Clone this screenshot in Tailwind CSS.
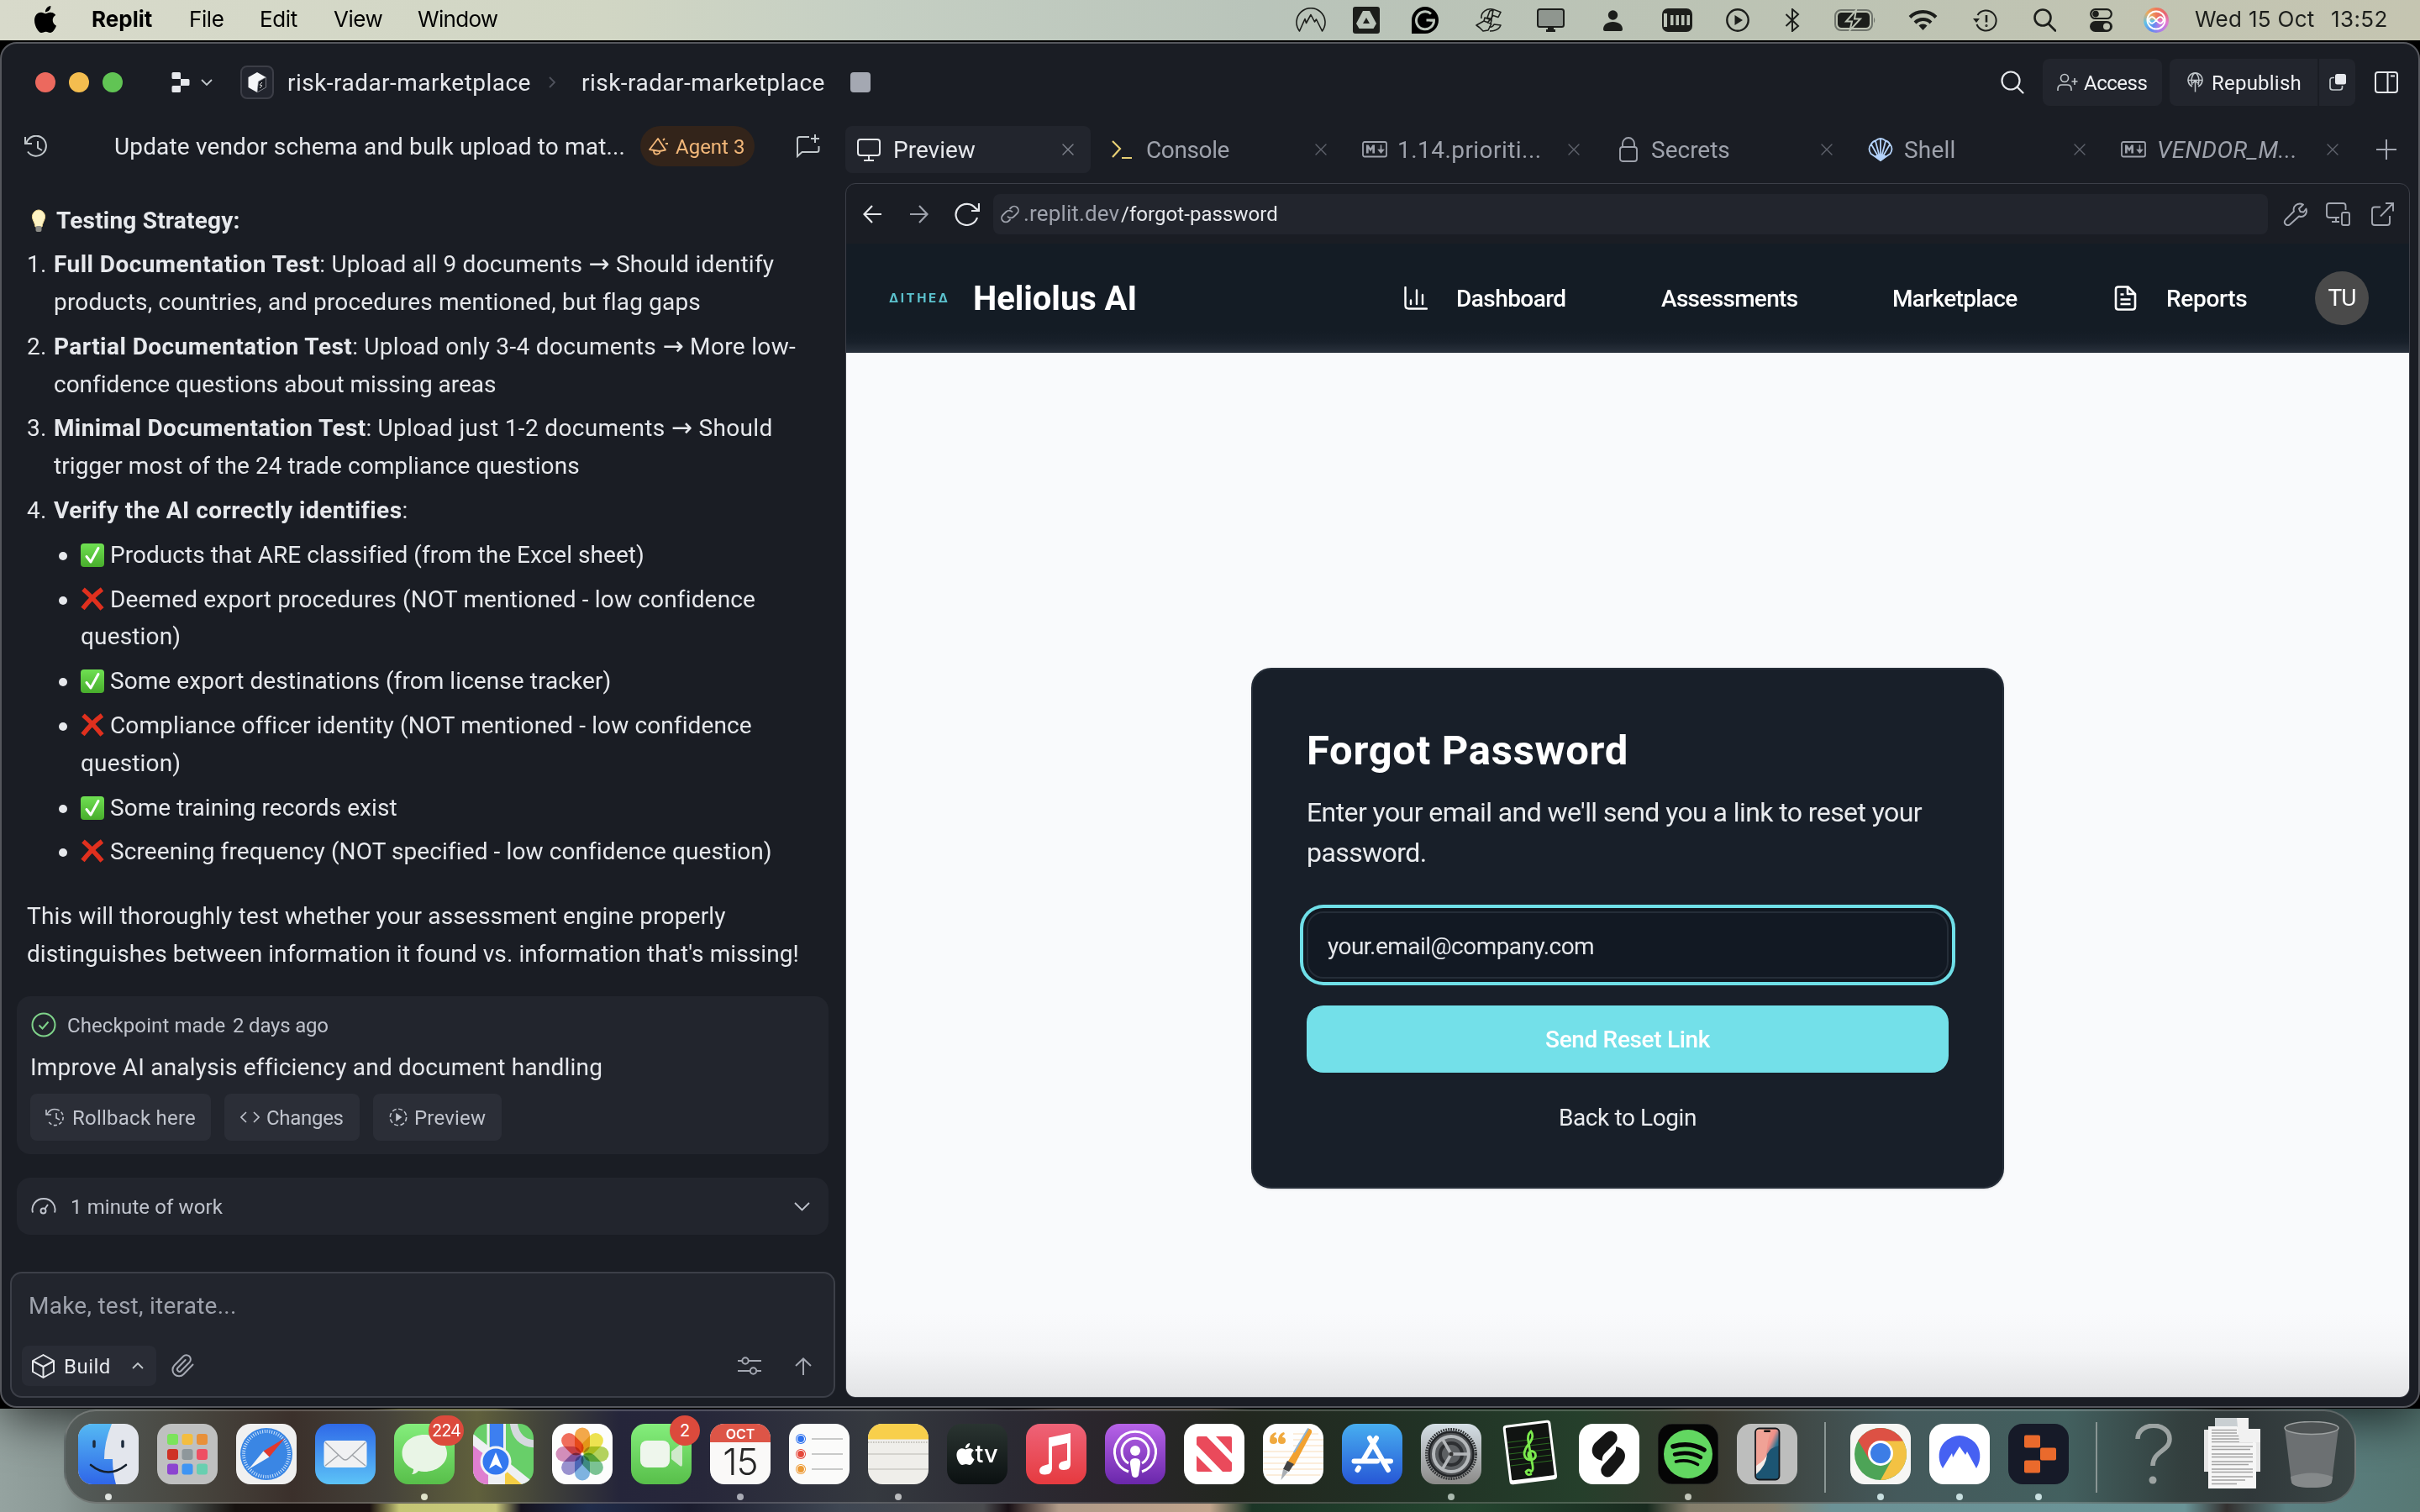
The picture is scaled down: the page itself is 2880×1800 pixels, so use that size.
<!DOCTYPE html>
<html lang="en">
<head>
<meta charset="utf-8">
<title>Replit</title>
<script src="https://cdn.jsdelivr.net/npm/@tailwindcss/browser@4"></script>
</head>
<body class="w-[2880px] h-[1800px] overflow-hidden bg-[#1b1d22] font-[Roboto,sans-serif]">

<svg class="absolute size-0">
  <defs><linearGradient id="yg" x1="0" y1="0" x2="0" y2="1"><stop offset="0" stop-color="#6fe052"/><stop offset="1" stop-color="#48ad2c"/></linearGradient></defs>
  <symbol id="x" viewBox="0 0 14 14"><path d="M1 1l12 12M13 1L1 13" fill="none" stroke="currentColor" stroke-width="1.4" stroke-linecap="round"/></symbol>
  <symbol id="md" viewBox="0 0 30 20"><rect x="1" y="1" width="28" height="17.500" rx="2" fill="none" stroke="currentColor" stroke-width="1.8"/><path d="M5 14.500v-10h2.500l2.500 4 2.500-4h2.500v10h-2.700v-5.500l-2.300 3.500-2.300-3.500v5.500z" fill="currentColor"/><path d="M22.500 4.500v8M19.800 10.500l2.700 3.200 2.700-3.200z" fill="currentColor" stroke="currentColor" stroke-width="1.600"/></symbol>
  <symbol id="yes" viewBox="0 0 28 28"><rect width="28" height="28" rx="4" fill="url(#yg)"/><path d="M7 15.500l5 6.500L21 5.500" fill="none" stroke="#fff" stroke-width="3" stroke-linecap="round" stroke-linejoin="round"/></symbol>
  <symbol id="no" viewBox="0 0 28 28"><path d="M3 2.500Q12 10 25.500 26M25.500 2.500Q14 11 2.500 25.500" fill="none" stroke="#e0301e" stroke-width="5.500"/></symbol>
</svg>

<div class="flex flex-col w-full h-full bg-[linear-gradient(90deg,#95a3a0_0,#8b9996_70px,#5d6763_200px,#17120f_280px,#1b1211_440px,#c4c574_475px,#c9c87c_590px,#15131f_620px,#202c4a_700px,#1b1c2e_820px,#3e4652_1000px,#4a4b4e_1170px,#191015_1200px,#b09a88_1260px,#c0a48c_1440px,#1b3526_1490px,#24452f_1750px,#182a1e_1960px,#857f6c_2010px,#8b8471_2110px,#6c9296_2180px,#6a9497_2600px,#33302f_2650px,#5d8284_2720px,#577874_2880px)]">

  <!-- menu bar -->
  <header class="relative z-10 h-12 shrink-0 flex items-center bg-[linear-gradient(90deg,#d8dacb,#d1d6c4_25%,#c5cfc3_36%,#b9c4ba_52%,#bcc3b4_72%,#c5c5b1)] text-[26px] leading-[30px] font-[Inter,sans-serif] text-black whitespace-nowrap">
    <svg class="ml-[38px] w-[32px] h-[32px] mb-[3px]" viewBox="0 0 24 24"><path d="M12.152 6.896c-.948 0-2.415-1.078-3.960-1.040-2.040.027-3.910 1.183-4.961 3.014-2.117 3.675-.546 9.103 1.519 12.090 1.013 1.454 2.208 3.090 3.792 3.039 1.520-.065 2.090-.987 3.935-.987 1.831 0 2.350.987 3.960.948 1.637-.026 2.676-1.480 3.676-2.948 1.156-1.688 1.636-3.325 1.662-3.415-.039-.013-3.182-1.221-3.220-4.857-.026-3.040 2.480-4.494 2.597-4.559-1.429-2.090-3.623-2.324-4.390-2.376-2-.156-3.675 1.090-4.610 1.090zM15.530 3.830c.843-1.012 1.400-2.427 1.245-3.830-1.207.052-2.662.805-3.532 1.818-.780.896-1.454 2.338-1.273 3.714 1.338.104 2.715-.688 3.559-1.701"/></svg>
    <span class="ml-[39px] pb-[2px] w-[116px] font-bold">Replit</span>
    <span class="pb-[2px] w-[84px] tracking-[-0.4px]">File</span>
    <span class="pb-[2px] w-[88px] tracking-[-0.4px]">Edit</span>
    <span class="pb-[2px] w-[100px] tracking-[-0.5px]">View</span>
    <span class="pb-[2px] w-[96px] tracking-[-0.7px]">Window</span>
    <div class="ml-auto pr-[38px] flex items-center text-[#1c1e1b]">
      <svg class="w-9 h-[30px]" viewBox="0 0 36 30" fill="none" stroke="currentColor" stroke-width="1.6" stroke-linejoin="round"><path d="M4.500 28A17 17 0 1 1 31.500 28L24.500 14l-2 3-4.500-8.500-5.500 10-1.500-5z"/></svg>
      <svg class="ml-8 w-8 h-8" viewBox="0 0 32 32"><rect width="32" height="32" rx="3" fill="currentColor"/><path d="M12 5h8l8 15-3.500 6h-17L4 20z" fill="#bac4ba"/><path d="M16 13l4 7h-8z" fill="currentColor"/></svg>
      <svg class="ml-[38px] w-8 h-8" viewBox="0 0 32 32"><path d="M0 32V16A16 16 0 1 1 16 32z" fill="#000"/><path d="M23 8.500A10.500 10.500 0 1 0 26.500 16h-9M26.500 16l-5 .2" fill="none" stroke="#bcc5bb" stroke-width="3"/></svg>
      <svg class="ml-11 w-8 h-7" viewBox="0 0 32 28" fill="none" stroke="currentColor" stroke-width="1.600" stroke-linejoin="round"><path d="M7 12C6 4 14-1 22 1.500l8 3-3 6-6-2-7 9M17 3l4-1-2 11-5-2zM11 11l8 3-1 4-8-3zM10 15L1 20l4 3 4 4 6-1 4-8M16 22c3 1 5-1 6-3l8 1c-2 5-8 7-13 7"/></svg>
      <svg class="ml-[41px] w-[33px] h-7" viewBox="0 0 33 28"><rect x="1" y="1" width="31" height="21" rx="2.500" fill="#8f968f" stroke="currentColor" stroke-width="2"/><path d="M13 22h7v3h2v3H11v-3h2z" fill="currentColor"/></svg>
      <svg class="ml-[46px] w-[23px] h-[25px]" viewBox="0 0 23 25" fill="currentColor"><circle cx="11.500" cy="6" r="5.700"/><path d="M0 23c0-5.500 4.500-9 11.500-9S23 17.500 23 23q0 2-2 2H2q-2 0-2-2z"/></svg>
      <svg class="ml-[47px] w-9 h-7" viewBox="0 0 36 28"><rect width="36" height="28" rx="7" fill="currentColor"/><path d="M2 6h4v16H2zM10 8h3.500v12H10zM16.500 8H20v12h-3.500zM23 8h3.500v12H23zM29.500 8H33v12h-3.500z" fill="#bcc4b8"/></svg>
      <svg class="ml-10 w-7 h-7" viewBox="0 0 28 28"><circle cx="14" cy="14" r="12.700" fill="none" stroke="currentColor" stroke-width="2.400"/><path d="M10.500 8l9.500 6-9.500 6z" fill="currentColor"/></svg>
      <svg class="ml-[42px] w-[18px] h-7" viewBox="0 0 18 28" fill="none" stroke="currentColor" stroke-width="2"><path d="M1.500 7l14.500 14-7 6V1l7 6L1.500 21"/></svg>
      <svg class="ml-[41px] w-[50px] h-[26px]" viewBox="0 0 50 26"><rect x="1" y="1" width="44" height="24" rx="7" fill="none" stroke="#6f746c" stroke-width="2"/><rect x="4" y="4" width="38" height="18" rx="4.500" fill="currentColor"/><path d="M26 1L14 14.500h7L18.500 25 31 11.500h-7z" fill="currentColor" stroke="#bcc3b4" stroke-width="2"/><path d="M47 9.500q2.500 3.500 0 7z" fill="#6f746c"/></svg>
      <svg class="ml-[38px] w-[35px] h-[26px]" viewBox="0 0 35 26" fill="none" stroke="currentColor" stroke-width="4"><path d="M2 9.500a22 22 0 0 1 31 0"/><path d="M8 16a13.500 13.500 0 0 1 19 0"/><path d="M17.500 25l-5-5.500a7.500 7.500 0 0 1 10 0z" fill="currentColor" stroke="none"/></svg>
      <svg class="ml-[42px] w-[29px] h-7" viewBox="0 0 29 28" fill="none" stroke="currentColor" stroke-width="2"><path d="M5.500 8A12 12 0 1 1 4.500 19"/><path d="M0 12h8l-4 5z" fill="currentColor" stroke="none"/><path d="M16 8v8.500" stroke-width="2.600"/><circle cx="16" cy="20.500" r=".6"/></svg>
      <svg class="ml-[43px] w-[27px] h-7" viewBox="0 0 27 28" fill="none" stroke="currentColor" stroke-width="2.600"><circle cx="11" cy="11" r="9.500"/><path d="M18 18.500l8 8" stroke-linecap="round"/></svg>
      <svg class="ml-10 w-[27px] h-7" viewBox="0 0 27 28"><rect x="1.200" y="1.200" width="24.600" height="10.800" rx="5.400" fill="none" stroke="currentColor" stroke-width="2.200"/><circle cx="7" cy="6.600" r="3.800" fill="currentColor"/><rect y="15" width="27" height="13" rx="6.500" fill="currentColor"/><circle cx="20" cy="21.500" r="4" fill="#c0c4b3"/></svg>
      <div class="ml-[37px] w-[30px] h-[30px] rounded-full bg-[conic-gradient(#ef7a5a,#e8656e,#e47ad0,#b07be8,#5f8df0,#5fc3e8,#e9ab5f,#ef7a5a)] flex items-center justify-center">
        <svg class="w-6 h-6" viewBox="0 0 24 24" fill="none" stroke="#fff" stroke-width="2"><circle cx="12" cy="12" r="10.500"/><path d="M3 12c3-6 6-4 9 0s6 6 9 0c-3-6-6-4-9 0s-6 6-9 0z" stroke-width="1.800"/></svg>
      </div>
      <span class="ml-[31px] pb-[2px] w-[144px] tracking-[0.3px]">Wed 15 Oct</span>
      <span class="ml-[18px] pb-[2px] w-[68px] tracking-[0.4px]">13:52</span>
    </div>
  </header>

  <!-- app window -->
  <div class="shrink-0 bg-black pt-[2px] h-[1629px] shadow-[0_8px_60px_#000000c0]">
  <main class="h-[1626px] w-full rounded-[20px] border-2 border-[#55575d] bg-[#1a1d24] flex flex-col text-[#e6e8ec] whitespace-nowrap text-[28px]">
    <div class="h-[92px] shrink-0 flex items-center">
      <div class="ml-10 flex gap-4"><i class="size-6 rounded-full bg-[#ec695e]"></i><i class="size-6 rounded-full bg-[#f4bd4f]"></i><i class="size-6 rounded-full bg-[#61c454]"></i></div>
      <svg class="ml-[58px] w-[22px] h-6" viewBox="0 0 22 24" fill="#e6e8ec"><path d="M2 0h7.500q1.500 0 1.500 1.500V8H2Q.500 8 .500 6.500v-5Q.500 0 2 0zM11 8h9q1.500 0 1.500 1.500v5Q21.500 16 20 16h-9zM2 16h9v6.500Q11 24 9.500 24H2Q.500 24 .500 22.500v-5Q.500 16 2 16z"/></svg>
      <svg class="ml-[13px] w-[14px] h-2" viewBox="0 0 14 8" fill="none" stroke="#c2c8cc" stroke-width="1.800"><path d="M1 1l6 6 6-6"/></svg>
      <div class="ml-[33px] size-10 rounded-lg border-2 border-[#3c3e47] bg-[#22252e] flex items-center justify-center"><svg class="w-[22px] h-6" viewBox="0 0 22 24"><path d="M11 0l10.500 6v12L11 24 .500 18V6z" fill="#f5f6f8"/><path d="M21.500 6v12L11 24l1.500-13z" fill="#1b1e25" stroke="#8b8e96" stroke-width=".7"/><path d="M17 12l-3 3 3 1-3 3" stroke="#ddd" fill="none"/></svg></div>
      <span class="ml-4 pt-[2px] w-[291px] tracking-[0.47px]">risk-radar-marketplace</span>
      <svg class="ml-5 w-2 h-[14px]" viewBox="0 0 8 14" fill="none" stroke="#50535d" stroke-width="1.800"><path d="M1 1l6 6-6 6"/></svg>
      <span class="ml-[31px] pt-[2px] w-[290px] tracking-[0.47px]">risk-radar-marketplace</span>
      <i class="ml-[30px] size-6 rounded-[4px] bg-[#a4a8b2]"></i>
      <svg class="ml-auto w-7 h-7" viewBox="0 0 28 28" fill="none" stroke="currentColor" stroke-width="2.200"><circle cx="12" cy="12" r="10.500"/><path d="M19.500 19.500l7 7" stroke-linecap="round"/></svg>
      <div class="ml-[22px] w-[142px] h-14 rounded-lg bg-[#22252d] flex items-center pl-[17px] text-[24px] text-[#f0f1f4]">
        <svg class="w-[25px] h-[22px]" viewBox="0 0 25 22" fill="none" stroke="#c2c8cc" stroke-width="1.600"><circle cx="9" cy="6" r="4.500"/><path d="M1 21v-2q0-5 5-5h6q5 0 5 5v2M21 6v8M17.500 10h7"/></svg>
        <span class="ml-[7px] pt-[2px] tracking-[-0.5px]">Access</span>
      </div>
      <div class="ml-[9px] w-[176px] h-14 rounded-l-lg bg-[#22252d] flex items-center pl-[21px] text-[24px] text-[#f0f1f4]">
        <svg class="w-[19px] h-6" viewBox="0 0 19 24" fill="none" stroke="#c2c8cc" stroke-width="1.500"><path d="M6 17A8.500 8.500 0 1 1 13 17M1 9.500h17M6 15C3.500 7 7 1.500 9.500 1c2.500.5 6 6 3.500 14M9.500 10v13.500M6.500 13l3-3 3 3"/></svg>
        <span class="ml-[10px] pt-[2px] tracking-[0.22px]">Republish</span>
      </div>
      <div class="ml-[2px] w-[43px] h-14 rounded-r-lg bg-[#22252d] flex items-center pl-[12px]"><svg class="size-[20px]" viewBox="0 0 20 20"><path d="M6 4.500H4Q1 4.500 1 7.500V16q0 3 3 3h8.500q3 0 3-3v-2" fill="none" stroke="#c2c8cc" stroke-width="1.700"/><rect x="7" width="13" height="12.500" rx="2.500" fill="#e6e8ec"/></svg></div>
      <svg class="ml-[23px] mr-6 w-7 h-[26px]" viewBox="0 0 28 26" fill="none" stroke="currentColor" stroke-width="2"><rect x="1" y="1" width="26" height="24" rx="3"/><path d="M15.500 1v24M19 5.500h5"/></svg>
    </div>

    <div class="flex-1 flex min-h-0">
      <!-- agent chat -->
      <section class="w-[1004px] shrink-0 flex flex-col">
        <div class="h-[60px] shrink-0 flex items-center">
          <svg class="ml-[27px] w-[29px] h-[27px]" viewBox="0 0 29 27" fill="none" stroke="#c2c8cc" stroke-width="2"><path d="M1 2v8h8M2.500 9A12 12 0 1 1 4 19.500M16 7v8l5 3"/></svg>
          <span class="ml-[78px] pt-[2px] w-[608px] tracking-[0.15px]">Update vendor schema and bulk upload to mat...</span>
          <div class="ml-[18px] w-[136px] h-12 rounded-[24px] bg-[#33241a] text-[#f2b779] text-[24px] flex items-center pl-[10px]">
            <svg class="w-6 h-[22px]" viewBox="0 0 24 22" fill="none" stroke="currentColor" stroke-width="1.800" stroke-linejoin="round"><path d="M1 15L11 2l9 13.500-7 1.500zM6 16.500q0 4.500 4 4t3-4M17 4l2-2M20 8h3"/></svg>
            <span class="ml-[8px] pt-[2px]">Agent 3</span>
          </div>
          <svg class="ml-[50px] w-7 h-7" viewBox="0 0 28 28" fill="none" stroke="#c2c8cc" stroke-width="2"><path d="M15 3H3.500Q1 3 1 5.500V26l5.500-5H24q2.500 0 2.500-2.500V14M22 0v10M17 5h10"/></svg>
        </div>

        <div class="mt-[36.500px] pl-[30px] leading-[44.8px] tracking-[0.16px]">
          <div class="flex items-center font-bold h-[44.8px]">
            <svg class="ml-[5px] w-[18px] h-7 mr-[12px]" viewBox="0 0 18 28"><path d="M9 1a8 8 0 0 1 7 11c-1 3-2.500 5-3 9H5c-.5-4-2-6-3-9A8 8 0 0 1 9 1z" fill="#fdf3c4" stroke="#f0d890"/><rect x="5.500" y="20" width="7" height="7" rx="2" fill="#8b8b86"/></svg>
            <span class="tracking-[0.2px]">Testing Strategy:</span>
          </div>
          <div class="mt-2 flex"><span class="w-[32px]">1.</span><p><b class="tracking-[0.45px]">Full Documentation Test</b>: <span class="tracking-[0.24px]">Upload all 9 documents <span class="font-['DejaVu_Sans'] text-[30px] leading-none">→</span> Should identify</span><br><span>products, countries, and procedures mentioned, but flag gaps</span></p></div>
          <div class="mt-2 flex"><span class="w-[32px]">2.</span><p><b class="tracking-[0.45px]">Partial Documentation Test</b>: <span class="tracking-[0.33px]">Upload only 3-4 documents <span class="font-['DejaVu_Sans'] text-[30px] leading-none">→</span> More low-</span><br><span class="tracking-[-0.02px]">confidence questions about missing areas</span></p></div>
          <div class="mt-2 flex"><span class="w-[32px]">3.</span><p><b class="tracking-[0.36px]">Minimal Documentation Test</b>: <span class="tracking-[0.33px]">Upload just 1-2 documents <span class="font-['DejaVu_Sans'] text-[30px] leading-none">→</span> Should</span><br><span class="tracking-[0.08px]">trigger most of the 24 trade compliance questions</span></p></div>
          <div class="mt-2 flex"><span class="w-[32px]">4.</span><p><b class="tracking-[0.46px]">Verify the AI correctly identifies</b>:</p></div>
          <div class="pl-[38px]">
            <div class="mt-2 flex"><i class="mt-[18px] size-[10px] rounded-full bg-[#e6e8ec]"></i><svg class="ml-[16px] mt-[8px] mr-[7px] size-7"><use href="#yes"/></svg><p class="tracking-[0.04px]">Products that ARE classified (from the Excel sheet)</p></div>
            <div class="mt-2 flex"><i class="mt-[18px] size-[10px] rounded-full bg-[#e6e8ec]"></i><svg class="ml-[16px] mt-[7px] mr-[7px] size-7"><use href="#no"/></svg><p>Deemed export procedures (NOT mentioned - low confidence<br><span class="-ml-[35px]">question)</span></p></div>
            <div class="mt-2 flex"><i class="mt-[18px] size-[10px] rounded-full bg-[#e6e8ec]"></i><svg class="ml-[16px] mt-[8px] mr-[7px] size-7"><use href="#yes"/></svg><p class="tracking-[0.07px]">Some export destinations (from license tracker)</p></div>
            <div class="mt-2 flex"><i class="mt-[18px] size-[10px] rounded-full bg-[#e6e8ec]"></i><svg class="ml-[16px] mt-[7px] mr-[7px] size-7"><use href="#no"/></svg><p><span class="tracking-[0.12px]">Compliance officer identity (NOT mentioned - low confidence</span><br><span class="-ml-[35px]">question)</span></p></div>
            <div class="mt-2 flex"><i class="mt-[18px] size-[10px] rounded-full bg-[#e6e8ec]"></i><svg class="ml-[16px] mt-[8px] mr-[7px] size-7"><use href="#yes"/></svg><p class="tracking-[0.07px]">Some training records exist</p></div>
            <div class="mt-2 flex"><i class="mt-[18px] size-[10px] rounded-full bg-[#e6e8ec]"></i><svg class="ml-[16px] mt-[7px] mr-[7px] size-7"><use href="#no"/></svg><p class="tracking-[0.1px]">Screening frequency (NOT specified - low confidence question)</p></div>
          </div>
          <p class="mt-8 tracking-[0.08px]"><span class="tracking-[0.17px]">This will thoroughly test whether your assessment engine properly</span><br>distinguishes between information it found vs. information that's missing!</p>
        </div>

        <div class="mt-[27.500px] ml-[18px] w-[966px] h-[188px] rounded-2xl bg-[#22252d] p-4 text-[24px] text-[#c0c4cd]">
          <div class="h-9 flex items-center">
            <svg class="ml-[1px] size-[30px]" viewBox="0 0 30 30" fill="none" stroke="#7fd38a" stroke-width="2"><circle cx="15" cy="15" r="13.500"/><path d="M9.500 15.500l4 4 7-8"/></svg>
            <span class="ml-[13px] pt-[1px] w-[197px] tracking-[0.1px]">Checkpoint made</span><span class="pt-[1px] tracking-[-0.2px]">2 days ago</span>
          </div>
          <div class="mt-[13px] text-[28px] leading-10 tracking-[0.21px] text-[#e6e8ec]">Improve AI analysis efficiency and document handling</div>
          <div class="mt-[11px] flex gap-4">
            <div class="w-[215px] h-14 rounded-lg bg-[#2b2e37] flex items-center pl-[18px]"><svg class="w-[23px] h-[22px]" viewBox="0 0 23 22" fill="none" stroke="currentColor" stroke-width="1.600"><path d="M1 2v6h6M2 8A9.500 9.500 0 0 1 13 1.700M13 6v6l4 2"/><path d="M13 1.700A9.500 9.500 0 1 1 3 15" stroke-dasharray="4 2.500"/></svg><span class="ml-[9px] pt-[2px] tracking-[0.24px]">Rollback here</span></div>
            <div class="w-[161px] h-14 rounded-lg bg-[#2b2e37] flex items-center pl-[19px]"><svg class="w-[23px] h-[14px]" viewBox="0 0 23 14" fill="none" stroke="currentColor" stroke-width="1.600"><path d="M7 1L1 7l6 6M16 1l6 6-6 6"/></svg><span class="ml-[8px] pt-[2px] tracking-[-0.3px]">Changes</span></div>
            <div class="w-[153px] h-14 rounded-lg bg-[#2b2e37] flex items-center pl-[19px]"><svg class="size-[22px]" viewBox="0 0 22 22" fill="none" stroke="currentColor" stroke-width="1.600"><circle cx="11" cy="11" r="9.700" stroke-dasharray="5 2.600"/><path d="M9 7.500l5 3.500-5 3.500z" fill="currentColor"/></svg><span class="ml-[8px] pt-[2px] tracking-[0.2px]">Preview</span></div>
          </div>
        </div>

        <div class="mt-7 ml-[18px] w-[966px] h-[68px] rounded-2xl bg-[#22252d] flex items-center pl-[17px] pr-[22px] text-[24px] text-[#c0c4cd]">
          <svg class="w-[30px] h-5" viewBox="0 0 30 20" fill="none" stroke="currentColor" stroke-width="1.900"><path d="M2 17.500C-.5 9 6 1 15 1s15.500 8 13 16.500"/><circle cx="14.500" cy="15.500" r="3"/><path d="M16.500 13l3.500-5"/></svg>
          <span class="ml-[17px] pt-[1px] tracking-[0.1px]">1 minute of work</span>
          <svg class="ml-auto w-[19px] h-[11px]" viewBox="0 0 19 11" fill="none" stroke="currentColor" stroke-width="1.800"><path d="M1 1l8.500 8.500L18 1"/></svg>
        </div>

        <div class="mt-11 ml-[10px] w-[982px] h-[150px] rounded-[14px] border-2 border-[#3c3f48] bg-[#22252d] pt-[19px]">
          <div class="ml-5 leading-10 text-[#9ea2ac] tracking-[0.25px]">Make, test, iterate...</div>
          <div class="mt-[27px] flex items-center text-[24px]">
            <div class="ml-[12px] w-[160px] h-12 rounded-lg bg-[#292c35] flex items-center pl-[12px]">
              <svg class="w-[27px] h-[29px]" viewBox="0 0 27 29" fill="none" stroke="currentColor" stroke-width="2" stroke-linejoin="round"><path d="M13.500 1L26 8v13l-12.500 7L1 21V8zM1.500 8.500l12 6.500 12-6.500M13.500 15v13"/></svg>
              <span class="ml-[11px] pt-[1px] w-[56px] tracking-[0.5px]">Build</span>
              <svg class="ml-[25px] w-[14px] h-2" viewBox="0 0 14 8" fill="none" stroke="#c2c8cc" stroke-width="1.800"><path d="M1 7l6-6 6 6"/></svg>
            </div>
            <svg class="ml-[18px] w-[27px] h-[28px]" viewBox="0 0 27 28" fill="none" stroke="#a4a8b2" stroke-width="2" stroke-linecap="round"><path d="M25.500 12.500L14.500 24a7.500 7.500 0 0 1-11-10.500L14 2.800a5 5 0 0 1 7.500 7L11.500 20a2.600 2.600 0 0 1-3.800-3.700l9-9.300"/></svg>
            <svg class="ml-auto w-7 h-[22px]" viewBox="0 0 28 22" fill="none" stroke="#a4a8b2" stroke-width="2"><circle cx="9" cy="5" r="3.700"/><path d="M0 5h5M13 5h15M0 17h14M23 17h5"/><circle cx="18.500" cy="17" r="3.700"/></svg>
            <svg class="ml-10 mr-[26px] w-5 h-[21px]" viewBox="0 0 20 21" fill="none" stroke="#a4a8b2" stroke-width="2"><path d="M10 21V1.500M1 10l9-8.500 9 8.500"/></svg>
          </div>
        </div>
      </section>

      <!-- workspace -->
      <section class="w-[1862px] shrink-0 pt-[6px] flex flex-col">
        <div class="flex gap-[9px] h-14 shrink-0 text-[#9ea2ac]">
          <div class="w-[292px] rounded-lg bg-[#22252d] flex items-center pl-[14px] text-[#e6e8ec]"><svg class="w-7 h-7" viewBox="0 0 28 28" fill="none" stroke="currentColor" stroke-width="2"><rect x="1" y="2" width="26" height="19" rx="3"/><path d="M14 21v5M8 27h12"/></svg><span class="ml-[15px] pt-[2px] w-[201px]">Preview</span><svg class="size-[14px] text-[#7f838d]"><use href="#x"/></svg></div>
          <div class="w-[292px] flex items-center pl-[16px]"><svg class="w-6 h-[22px]" viewBox="0 0 24 22" fill="none" stroke="#e7cf74" stroke-width="2.200"><path d="M1 1l9 9-9 10M12 21h12"/></svg><span class="ml-[17px] pt-[2px] w-[201px] tracking-[-0.39px]">Console</span><svg class="size-[14px] text-[#5f636d]"><use href="#x"/></svg></div>
          <div class="w-[292px] flex items-center pl-[13px]"><svg class="w-[30px] h-5"><use href="#md"/></svg><span class="ml-[12px] pt-[2px] w-[203px] tracking-[0.45px]">1.14.prioriti...</span><svg class="size-[14px] text-[#5f636d]"><use href="#x"/></svg></div>
          <div class="w-[292px] flex items-center pl-[18px]"><svg class="w-[22px] h-[30px]" viewBox="0 0 22 30" fill="none" stroke="currentColor" stroke-width="1.900"><rect x="1" y="12" width="20" height="17" rx="3"/><path d="M4 12V8a7 7 0 0 1 14 0v4"/></svg><span class="ml-[16px] pt-[2px] w-[202px]">Secrets</span><svg class="size-[14px] text-[#5f636d]"><use href="#x"/></svg></div>
          <div class="w-[292px] flex items-center pl-[13px]"><svg class="w-[30px] h-[28px]" viewBox="0 0 30 28" fill="none" stroke="#b4d3fb" stroke-width="1.800" stroke-linejoin="round"><path d="M15 27L3.500 19q-4-6 0-11Q6 4 9 3.500 12 1 15 1t6 2.500Q24 4 26.500 8q4 5 0 11zM15 27L4 8M15 27L9 4M15 27V1M15 27l6-23M15 27L26 8"/><path d="M9 22l6 5 6-5-6-2z" fill="#b4d3fb"/></svg><span class="ml-[13px] pt-[2px] w-[202px] tracking-[0.2px]">Shell</span><svg class="size-[14px] text-[#5f636d]"><use href="#x"/></svg></div>
          <div class="w-[278px] flex items-center pl-[13px]"><svg class="w-[30px] h-5"><use href="#md"/></svg><span class="ml-[13px] pt-[2px] w-[202px] italic tracking-[0.4px]">VENDOR_M...</span><svg class="size-[14px] text-[#5f636d]"><use href="#x"/></svg></div>
          <svg class="ml-[30px] mt-4 size-6" viewBox="0 0 24 24" fill="none" stroke="#a4a8b2" stroke-width="2"><path d="M12 0v24M0 12h24"/></svg>
        </div>

        <div class="mt-3 h-[1446px] rounded-xl border border-[#3c3f48] overflow-hidden flex flex-col bg-[#1a1d24]">
          <div class="h-[71px] shrink-0 flex items-center text-[24px]">
            <svg class="ml-5 w-[22px] h-[22px]" viewBox="0 0 22 22" fill="none" stroke="#e6e8ec" stroke-width="2.200"><path d="M22 11H1.500M11 1L1.500 11 11 21"/></svg>
            <svg class="ml-[34px] w-[22px] h-[22px]" viewBox="0 0 22 22" fill="none" stroke="#9ea2ac" stroke-width="2.200"><path d="M0 11h20.500M11 1l9.500 10L11 21"/></svg>
            <svg class="ml-[31px] w-[30px] h-7" viewBox="0 0 30 28" fill="none" stroke="#e6e8ec" stroke-width="2.200"><path d="M27 18A13 12.500 0 1 1 25 7l4 3M29 1v9h-9"/></svg>
            <div class="ml-4 w-[1517px] h-12 rounded-lg bg-[#22252d] flex items-center">
              <svg class="ml-[9px] w-[22px] h-[22px]" viewBox="0 0 22 22" fill="none" stroke="#9ea2ac" stroke-width="1.800"><path d="M8 13.500a5 5 0 0 0 7.500.5l4-4a4.800 4.800 0 0 0-7-7l-2 2M14 8.500a5 5 0 0 0-7.500-.5l-4 4a4.800 4.800 0 0 0 7 7l2-2"/></svg>
              <span class="ml-[5px] w-[116px] text-[26px] text-[#9ea2ac] tracking-[0.15px]">.replit.dev</span><span class="tracking-[0.05px]">/forgot-password</span>
            </div>
            <svg class="ml-[18px] w-[29px] h-[28px]" viewBox="0 0 29 28" fill="none" stroke="#a4a8b2" stroke-width="1.900" stroke-linejoin="round"><path d="M24 2.500l-5 5 1.500 3.500 4 .5 3-4c2 6-3 11-8.500 9L8.500 26q-3 2.500-5.500 0t0-5.500L13 10.500C11 5 17-.5 24 2.500z"/></svg>
            <svg class="ml-[22px] w-[29px] h-[28px]" viewBox="0 0 29 28" fill="none" stroke="#a4a8b2" stroke-width="1.900"><path d="M23.500 9V4q0-3-3-3H4Q1 1 1 4v11q0 3 3 3h12M12 18v4.500M7 23h9"/><rect x="19" y="12" width="9" height="15" rx="2"/></svg>
            <svg class="ml-[25px] w-[27px] h-[28px]" viewBox="0 0 27 28" fill="none" stroke="#a4a8b2" stroke-width="1.900"><path d="M11 5.500H4q-3 0-3 3V24q0 3 3 3h15q3 0 3-3v-8M11 16.500L26 1M17 1h9v9.500"/></svg>
          </div>

          <div class="h-[130px] shrink-0 flex items-center bg-[linear-gradient(#141c25_80%,#18202a_90%,#29313c)] text-white font-medium">
            <span class="ml-[51px] w-[73px] text-[15px] font-[Inter] font-bold text-[#5cc3cf] tracking-[2.6px]">ΔITHEΔ</span>
            <span class="ml-[27px] w-[193px] pt-[2px] text-[40px] font-bold tracking-[-0.05px]">Heliolus AI</span>
            <svg class="ml-[320px] w-7 h-7" viewBox="0 0 28 28" fill="none" stroke="currentColor" stroke-width="2.400" stroke-linecap="round"><path d="M1.500 1v21.500q0 4 4 4H27M8 16.500V21M15 4.500V21M22 10v11"/></svg>
            <span class="ml-[34px] w-[131px] pt-[2px] tracking-[-0.55px]">Dashboard</span>
            <span class="ml-[113px] w-[162px] pt-[2px] tracking-[-0.68px]">Assessments</span>
            <span class="ml-[113px] w-[149px] pt-[2px] tracking-[-0.65px]">Marketplace</span>
            <svg class="ml-[115px] w-[27px] h-[30px]" viewBox="0 0 27 30" fill="none" stroke="currentColor" stroke-width="2.600" stroke-linejoin="round"><path d="M16.500 1.500H5q-3 0-3 3v21q0 3 3 3h17q3 0 3-3V10zM16 1.500V10h9M7.500 10.500h4M7.500 16.500h12M7.500 22h12"/></svg>
            <span class="ml-[35px] w-[97px] pt-[2px] tracking-[-0.3px]">Reports</span>
            <span class="ml-[80px] size-16 rounded-full bg-[#4a4a4a] flex items-center justify-center font-normal tracking-[-1px]">TU</span>
          </div>

          <div class="flex-1 bg-[linear-gradient(#f9fafc_92%,#f4f5f7_95.5%,#e2e3e5)] flex flex-col items-center">
            <form class="mt-[375px] w-[896px] h-[620px] rounded-3xl border-2 border-[#262e39] bg-[#181f29] px-16 pt-[67px] shadow-sm text-[#f3f4f6]">
              <h1 class="text-[49px] leading-[60px] font-bold tracking-[0.7px] text-white">Forgot Password</h1>
              <p class="mt-[19px] text-[32px] leading-[48px] tracking-[-0.58px] text-[#e9ebee]">Enter your email and we'll send you a link to reset your<br>password.</p>
              <div class="mt-[46px] h-20 rounded-[20px] border-2 border-[#252d38] bg-[#121923] shadow-[0_0_0_4px_#111821,0_0_0_8px_#6fdfe8] flex items-center pl-[23px] pt-[3px] tracking-[-0.54px] text-[#e5e7eb]">your.email@company.com</div>
              <div class="mt-8 h-20 rounded-[20px] bg-[#73e0e9] flex items-center justify-center pt-[2px] text-white font-medium tracking-[-0.34px]">Send Reset Link</div>
              <div class="mt-[32px] text-center leading-[44px] tracking-[-0.41px] text-[#e9ebee]">Back to Login</div>
            </form>
          </div>
        </div>
      </section>
    </div>
  </main>
  </div>

  <!-- dock -->
  <nav class="relative mx-[76px] mt-px shrink-0 h-[112px] rounded-[38px] border-2 border-[#ffffff30] pl-[15px] pt-[15px] flex gap-[22px] font-[Inter,sans-serif] bg-[linear-gradient(90deg,#545c5a_0,#48463f_150px,#3b302b_270px,#45423a_380px,#60603c_490px,#44453a_560px,#25253a_660px,#27273a_760px,#35393f_960px,#2b2a33_1120px,#2a252b_1240px,#22271f_1400px,#213225_1620px,#253f2b_1800px,#39392f_1960px,#404a48_2070px,#44595b_2180px,#43605f_2380px,#333f3e_2520px,#30383a_2600px,#3b4646_2728px)]">
    <div class="w-[72px] flex flex-col items-center"><svg class="size-[72px]" viewBox="0 0 72 72"><defs><linearGradient id="fb" x1="0" y1="0" x2="0" y2="1"><stop stop-color="#55b9f3"/><stop offset="1" stop-color="#2f66e8"/></linearGradient><clipPath id="rc"><rect width="72" height="72" rx="17"/></clipPath></defs><g clip-path="url(#rc)"><rect width="72" height="72" fill="#e3e6ed"/><path d="M0 0h40Q31 22 31 42h10Q41 58 45 72H0z" fill="url(#fb)"/></g><path d="M19 21v6M53 21v6" stroke="#1d2b3c" stroke-width="3.500" stroke-linecap="round"/><path d="M15 49q21 17 42 0" fill="none" stroke="#15202e" stroke-width="2.600" stroke-linecap="round"/></svg><i class="mt-[11px] size-2 rounded-full bg-[#dfe3df]"></i></div>
    <svg class="size-[72px]" viewBox="0 0 72 72"><rect width="72" height="72" rx="17" fill="#bfc0c0"/><g><rect x="12" y="12" width="13" height="13" rx="3" fill="#7be35c"/><rect x="29.500" y="12" width="13" height="13" rx="3" fill="#f3bd3f"/><rect x="47" y="12" width="13" height="13" rx="3" fill="#e8903a"/><rect x="12" y="30" width="13" height="13" rx="3" fill="#cf3226"/><rect x="29.500" y="30" width="13" height="13" rx="3" fill="#8e979b"/><rect x="47" y="30" width="13" height="13" rx="3" fill="#ee4f63"/><rect x="12" y="47.500" width="13" height="13" rx="3" fill="#8c44d0"/><rect x="29.500" y="47.500" width="13" height="13" rx="3" fill="#3f95f3"/><rect x="47" y="47.500" width="13" height="13" rx="3" fill="#68cfb0"/></g></svg>
    <svg class="size-[72px]" viewBox="0 0 72 72"><rect width="72" height="72" rx="17" fill="#f0f0f0"/><circle cx="36" cy="36" r="31" fill="#3a86e4"/><circle cx="36" cy="36" r="27" fill="none" stroke="#cfe4fb" stroke-width="4" stroke-dasharray="1 1.830"/><path d="M58 17L39.500 39.500l-7-7z" fill="#e2382e"/><path d="M15 54l17.500-21.500 7 7z" fill="#f3f4f6"/></svg>
    <svg class="size-[72px]" viewBox="0 0 72 72"><defs><linearGradient id="ml" x1="0" y1="0" x2="0" y2="1"><stop stop-color="#2f69e8"/><stop offset="1" stop-color="#5cc3f7"/></linearGradient></defs><rect width="72" height="72" rx="17" fill="url(#ml)"/><rect x="10.500" y="20" width="51" height="32" rx="4" fill="#f0f1f3"/><path d="M12 22l20 19q4 4 8 0l20-19M12 50l16-13M60 50L44 37" fill="none" stroke="#9fa3a8" stroke-width="1.500"/></svg>
    <div class="relative w-[72px] flex flex-col items-center"><svg class="size-[72px]" viewBox="0 0 72 72"><defs><linearGradient id="ms" x1="0" y1="0" x2="0" y2="1"><stop stop-color="#84ee7c"/><stop offset="1" stop-color="#58bf4a"/></linearGradient></defs><rect width="72" height="72" rx="17" fill="url(#ms)"/><path d="M36 13c15 0 27 9.500 27 22S51 57 36 57q-4 0-7-1-3 4-8 4 2.500-3 2-6C14 50 9.500 43 9.500 35 9.500 22.500 21 13 36 13z" fill="#e9f5e6"/></svg><i class="mt-[11px] size-2 rounded-full bg-[#dfe3c9]"></i><span class="absolute -top-[10px] left-[41px] w-[42px] h-9 rounded-[18px] bg-[#dc4a3c] text-white text-[20px] leading-9 text-center tracking-[-1px]">224</span></div>
    <svg class="size-[72px]" viewBox="0 0 72 72"><g clip-path="url(#rc)"><rect width="72" height="72" fill="#68cf69"/><path d="M0 12L72 70v2H0z" fill="#eef0f3"/><path d="M0 26v46h18V40z" fill="#df7fd0"/><path d="M38 72V55l20 17z" fill="#f5ce45"/><path d="M20 0h16v40H20z" fill="#3d7ff0"/><path d="M18 0v36M37.500 0v40" stroke="#eef0f3" stroke-width="3"/><path d="M48-4q2 28 28 28" fill="none" stroke="#d5d9de" stroke-width="9"/></g><circle cx="27" cy="45" r="18.500" fill="#f3f4f7"/><circle cx="27" cy="45" r="15.500" fill="#3478f0"/><path d="M27 34l8 19.500-8-5-8 5z" fill="#fff"/></svg>
    <svg class="size-[72px]" viewBox="0 0 72 72"><rect width="72" height="72" rx="17" fill="#fdfdfd"/><g class="[&>rect]:mix-blend-multiply"><rect x="27" y="4.500" width="18" height="30" rx="9" fill="#f5a94a"/><rect x="27" y="4.500" width="18" height="30" rx="9" fill="#efe450" transform="rotate(45 36 36)"/><rect x="27" y="4.500" width="18" height="30" rx="9" fill="#b5d45e" transform="rotate(90 36 36)"/><rect x="27" y="4.500" width="18" height="30" rx="9" fill="#7cc494" transform="rotate(135 36 36)"/><rect x="27" y="4.500" width="18" height="30" rx="9" fill="#80b5e2" transform="rotate(180 36 36)"/><rect x="27" y="4.500" width="18" height="30" rx="9" fill="#9a92d0" transform="rotate(225 36 36)"/><rect x="27" y="4.500" width="18" height="30" rx="9" fill="#d48fbc" transform="rotate(270 36 36)"/><rect x="27" y="4.500" width="18" height="30" rx="9" fill="#f26e5c" transform="rotate(315 36 36)"/></g></svg>
    <div class="relative size-[72px]"><svg class="size-[72px]" viewBox="0 0 72 72"><rect width="72" height="72" rx="17" fill="url(#ms)"/><rect x="11" y="20" width="35" height="32" rx="8" fill="#eef6ec"/><path d="M48 33l10-8q3-2 3 2v21q0 4-3 2l-10-8z" fill="#cfe9ca"/></svg><span class="absolute -top-[10px] left-[46px] size-9 rounded-full bg-[#dc4a3c] text-white text-[20px] leading-9 text-center">2</span></div>
    <div class="w-[72px] flex flex-col items-center"><div class="size-[72px] rounded-[17px] overflow-hidden bg-[#faf9f8] text-center"><div class="h-[22px] bg-[#dd5547] text-white text-[16px] leading-[24px] font-semibold">OCT</div><div class="text-[44px] leading-[46px] tracking-[-1px] text-[#262626] font-light">15</div></div><i class="mt-[11px] size-2 rounded-full bg-[#a9abb5]"></i></div>
    <svg class="size-[72px]" viewBox="0 0 72 72"><rect width="72" height="72" rx="17" fill="#fbfbfa"/><path d="M27 18h37M27 36h37M27 54h37" stroke="#b9bbb9" stroke-width="1.600"/><g fill="#2f72ee"><circle cx="14" cy="18" r="6"/><circle cx="14" cy="36" r="6" fill="#e5483b"/><circle cx="14" cy="54" r="6" fill="#ec9a35"/></g><g fill="none" stroke="#fff" stroke-width="1.100"><circle cx="14" cy="18" r="4.500"/><circle cx="14" cy="36" r="4.500"/><circle cx="14" cy="54" r="4.500"/></g></svg>
    <div class="w-[72px] flex flex-col items-center"><svg class="size-[72px]" viewBox="0 0 72 72"><g clip-path="url(#rc)"><rect width="72" height="72" fill="#efeeea"/><rect width="72" height="18.500" fill="#f8cf4b"/><path d="M0 22h72" stroke="#b7b5ad" stroke-width="1.500" stroke-dasharray="1.500 1.500"/><path d="M0 36h72M0 54h72" stroke="#cbcac5" stroke-width="1.300"/></g></svg><i class="mt-[11px] size-2 rounded-full bg-[#b9bbbd]"></i></div>
    <div class="size-[72px] rounded-[17px] bg-[linear-gradient(#2a3431,#0b1011)] flex items-center justify-center text-white"><svg class="w-[22px] h-[26px]" viewBox="2 0 20 24" fill="#fff"><path d="M12.152 6.896c-.948 0-2.415-1.078-3.960-1.040-2.040.027-3.910 1.183-4.961 3.014-2.117 3.675-.546 9.103 1.519 12.090 1.013 1.454 2.208 3.090 3.792 3.039 1.520-.065 2.090-.987 3.935-.987 1.831 0 2.350.987 3.960.948 1.637-.026 2.676-1.480 3.676-2.948 1.156-1.688 1.636-3.325 1.662-3.415-.039-.013-3.182-1.221-3.220-4.857-.026-3.040 2.480-4.494 2.597-4.559-1.429-2.090-3.623-2.324-4.390-2.376-2-.156-3.675 1.090-4.610 1.090zM15.530 3.830c.843-1.012 1.400-2.427 1.245-3.830-1.207.052-2.662.805-3.532 1.818-.780.896-1.454 2.338-1.273 3.714 1.338.104 2.715-.688 3.559-1.701"/></svg><span class="text-[29px] leading-none font-medium mb-[2px]">tv</span></div>
    <svg class="size-[72px]" viewBox="0 0 72 72"><defs><linearGradient id="mu" x1="0" y1="0" x2="0" y2="1"><stop stop-color="#ee6378"/><stop offset="1" stop-color="#e63a3f"/></linearGradient></defs><rect width="72" height="72" rx="17" fill="url(#mu)"/><path d="M27 16.500L53 11v37q0 7-8 7-6 0-6-4.500 0-5 6-6l4-1V23l-18 4v26q0 7.500-8.500 7.500-6.500 0-6.500-4.500 0-5 6-6.500l5-1.500z" fill="#fff"/></svg>
    <svg class="size-[72px]" viewBox="0 0 72 72"><defs><linearGradient id="po" x1="0" y1="0" x2="0" y2="1"><stop stop-color="#b763e8"/><stop offset="1" stop-color="#6a27ab"/></linearGradient></defs><rect width="72" height="72" rx="17" fill="url(#po)"/><g fill="none" stroke="#fff" stroke-width="3"><path d="M28 57a24.500 24.500 0 1 1 16 0"/><path d="M28 47a16 16 0 1 1 16 0"/></g><circle cx="36" cy="32" r="6" fill="#fff"/><path d="M36 41q7 0 6 7l-2 13q-1 3-4 3t-4-3l-2-13q-1-7 6-7z" fill="#fff"/></svg>
    <svg class="size-[72px]" viewBox="0 0 72 72"><rect width="72" height="72" rx="17" fill="#fff"/><path d="M15 17q0-2 2-2h10l30 31v9q0 2-2 2H46L15 25zM38 15h17q2 0 2 2v18.500zM15 38v17q0 2 2 2h17z" fill="#ea4a5b"/></svg>
    <svg class="size-[72px]" viewBox="0 0 72 72"><rect width="72" height="72" rx="17" fill="#fefefe"/><path d="M36 12h30M36 19h36M36 26h36M0 33h72M0 40h72M0 47h72M0 54h72M4 61h64" stroke="#f7dcb8" stroke-width="1.200"/><path d="M8 20q0-8 7-10l1 2q-3 2-3 4 4 0 4 4t-4.500 4-4.500-4zM18 20q0-8 7-10l1 2q-3 2-3 4 4 0 4 4t-4.500 4-4.500-4z" fill="#f0a93e"/><path d="M54 5.500q5 1 4 5L37 50l-8-4z" fill="#f2a12f"/><path d="M54 5.500L37 34" stroke="#8db4d6" stroke-width="2"/><path d="M29 44l8 4-6 9-7-3z" fill="#444"/><path d="M24 54l6 3-8.500 10z" fill="#a9aeb3"/></svg>
    <svg class="size-[72px]" viewBox="0 0 72 72"><defs><linearGradient id="as" x1="0" y1="0" x2="0" y2="1"><stop stop-color="#47aef0"/><stop offset="1" stop-color="#2757d6"/></linearGradient></defs><rect width="72" height="72" rx="17" fill="url(#as)"/><g stroke="#fff" stroke-width="6" stroke-linecap="round"><path d="M41 17L25 44M33 17l22 38M14.500 44.500H42M52 44.500h6M20 52.500l-1.500 2.500"/></g></svg>
    <div class="w-[72px] flex flex-col items-center"><svg class="size-[72px]" viewBox="0 0 72 72"><defs><linearGradient id="st" x1="0" y1="0" x2="0" y2="1"><stop stop-color="#d5dfe6"/><stop offset="1" stop-color="#8b8a88"/></linearGradient></defs><rect width="72" height="72" rx="17" fill="url(#st)"/><circle cx="36" cy="36" r="29.500" fill="none" stroke="#303234" stroke-width="3" stroke-dasharray="1.800 1.200"/><circle cx="36" cy="36" r="26.500" fill="#4a4c4f" stroke="#222427" stroke-width="2.500"/><circle cx="36" cy="36" r="21" fill="#5c5f62" stroke="#b4b7ba" stroke-width="4"/><circle cx="36" cy="36" r="13" fill="none" stroke="#2d2f32" stroke-width="4"/><path d="M36 36h22M36 36L25 17M36 36L25 55" stroke="#b4b7ba" stroke-width="3.500"/><circle cx="36" cy="36" r="2.500" fill="#333"/></svg><i class="mt-[11px] size-2 rounded-full bg-[#a9b9ae]"></i></div>
    <svg class="w-[72px] h-[82px] -mt-[6px]" viewBox="0 0 72 82"><g transform="rotate(-7 36 41)"><rect x="7.500" y="4.500" width="57" height="71" rx="4" fill="#fff"/><rect x="10.500" y="7.500" width="51" height="63" rx="1.500" fill="#111412"/><path d="M11 25h50M11 32h50M11 39h50M11 46h50M11 53h50" stroke="#2c6a22"/></g><path d="M37 66q-5 2-6-3 4-4 6 0 3-1 2-7L34 28q-2-9 3-13 4 5-1 13-7 8-7 14 1 8 9 7 6-2 4-8-4-5-8 0-1 4 2 6" fill="none" stroke="#7bea4d" stroke-width="2.800" stroke-linecap="round"/></svg>
    <svg class="size-[72px]" viewBox="0 0 72 72"><rect width="72" height="72" rx="17" fill="#fff"/><path d="M28 44C14 41 13 29 20 22L32 11q7-6 13 2 2 6-2 10L30 36q-3 4-2 8zM44 27c14 3 13 15 6 22L40 61q-7 6-13-2-2-6 2-10l12-13q4-4 3-9z" fill="#151515"/></svg>
    <div class="w-[72px] flex flex-col items-center"><svg class="size-[72px]" viewBox="0 0 72 72"><rect width="72" height="72" rx="17" fill="#050505" stroke="#2a2c2b"/><circle cx="36" cy="36" r="29" fill="#62d761"/><g fill="none" stroke="#050505" stroke-linecap="round"><path d="M18 27q20-6 37 4" stroke-width="5.500"/><path d="M20 36.500q17-4.500 31 3.500" stroke-width="4.500"/><path d="M21.500 45q14-3.500 26 3.500" stroke-width="3.600"/></g></svg><i class="mt-[11px] size-2 rounded-full bg-[#c0c4b8]"></i></div>
    <svg class="size-[72px]" viewBox="0 0 72 72"><defs><linearGradient id="ip" x1="0" y1="0" x2="1" y2="1"><stop stop-color="#f6bf9f"/><stop offset=".45" stop-color="#ee8f88"/><stop offset=".6" stop-color="#2f7391"/><stop offset="1" stop-color="#143a55"/></linearGradient></defs><rect width="72" height="72" rx="17" fill="#bdbebd"/><rect x="22" y="5.500" width="28.500" height="61" rx="4.500" fill="url(#ip)"/><path d="M23 58q11-10 12-22 1-14 5-28h-17z" fill="#f0a296"/><path d="M23 66V58q12-12 13-22 4-8 14-10v38q0 2-3 2z" fill="#1c5573"/><path d="M23 60V50q12-8 13-14-1 14-13 24z" fill="#f4ece8"/><rect x="22" y="5.500" width="28.500" height="61" rx="4.500" fill="none" stroke="#15181d" stroke-width="1.800"/><rect x="32" y="7.500" width="8" height="2.500" rx="1.200" fill="#111"/></svg>
    <i class="ml-[10px] mr-[7px] -mt-[2px] w-[2px] h-[84px] bg-[#8a9694]"></i>
    <div class="w-[72px] flex flex-col items-center"><svg class="size-[72px]" viewBox="0 0 72 72"><rect width="72" height="72" rx="17" fill="#f6f6f4"/><circle cx="36" cy="36" r="31" fill="#4da457"/><path d="M36 36L9.200 20.500A31 31 0 0 1 62.800 20.500z" fill="#dd5144"/><path d="M36 67A31 31 0 0 0 62.800 20.500H36L49 43.500z" fill="#f3c243"/><path d="M9.500 20L23 43.500 36 28V20.500z" fill="#dd5144"/><circle cx="36" cy="35" r="15" fill="#fff"/><circle cx="36" cy="35" r="12" fill="#3c7de6"/></svg><i class="mt-[11px] size-2 rounded-full bg-[#c8dfe0]"></i></div>
    <div class="w-[72px] flex flex-col items-center"><svg class="size-[72px]" viewBox="0 0 72 72"><rect width="72" height="72" rx="17" fill="#fff"/><path d="M16 53C9 42 11 29 18 22q18-16 36 0c7 7 9 20 2 31L45 33l-2 4-7-10-8 13-1-5z" fill="#4661f2"/></svg><i class="mt-[11px] size-2 rounded-full bg-[#c8dfe0]"></i></div>
    <div class="w-[72px] flex flex-col items-center"><svg class="size-[72px]" viewBox="0 0 72 72"><rect width="72" height="72" rx="17" fill="#161a28"/><g fill="#ea6a2c"><rect x="19" y="13.500" width="19" height="15" rx="2"/><rect x="38" y="28.500" width="19" height="15" rx="2"/><rect x="19" y="43.500" width="19" height="15" rx="2"/></g></svg><i class="mt-[11px] size-2 rounded-full bg-[#c8dfe0]"></i></div>
    <i class="ml-[10px] mr-[7px] -mt-[2px] w-[2px] h-[84px] bg-[#8a9694]"></i>
    <svg class="size-[72px]" viewBox="0 0 72 72"><path d="M19 18C19-3 57-3 57 18c0 15-20 14-20 32" fill="none" stroke="#9ca3a2" stroke-width="5.500"/><circle cx="37" cy="67" r="4.500" fill="#9ca3a2"/></svg>
    <svg class="w-[72px] h-[86px] -mt-2" viewBox="0 0 72 86"><rect x="17" y="1" width="40" height="30" fill="#c9cfd2"/><rect x="4" y="15" width="67" height="50" fill="#e6e6e6"/><path d="M9 11h34l23 20v54H9z" fill="#f6f6f6"/><path d="M13 15.500h30M13 19h30M13 22.500h34M13 26h34M13 29.500h49M13 35h49M13 38.500h46M13 44h49M13 47.500h49M13 53h49M13 56.500h44M13 62h49M13 65.500h49M13 71h49M13 75h40M13 79.500h30" stroke="#a3a3a3" stroke-width="1.400"/><path d="M43 1h14v13h14v16H46q-2-16-3-29z" fill="#f1f1f1"/></svg>
    <svg class="w-[72px] h-[80px] -mt-[3px] ml-[2px]" viewBox="0 0 72 80"><path d="M4 8L12 72q1 7 24 7t24-7L68 8z" fill="#6c7072"/><path d="M11 66q25-9 50 0l-1 6q-1 7-24 7t-24-7z" fill="#85898a"/><ellipse cx="36" cy="8" rx="32" ry="7.500" fill="#4e5354" stroke="#9da1a1" stroke-width="1.500"/></svg>
  </nav>
</div>
</body>
</html>
